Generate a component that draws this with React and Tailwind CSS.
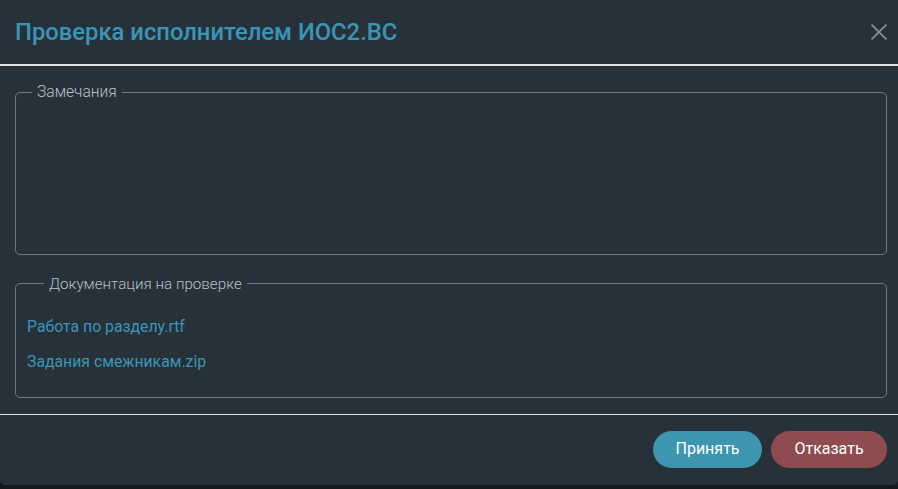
export default function App() {
  return (
    <div className="h-[489px] w-[898px] overflow-hidden bg-[#14191d] font-['Roboto',sans-serif]">
      <div className="flex h-[485px] flex-col rounded-b-[5px] bg-[#27313a]">
        <header className="flex h-[64px] items-center justify-between pl-[15px] pr-[11px]">
          <h1 className="pt-[2px] text-[23.8px] font-medium text-[#3b95b5]">Проверка исполнителем ИОС2.ВС</h1>
          <button type="button" aria-label="Закрыть" className="text-[#8b939a]">
            <svg width="16" height="16" viewBox="0 0 16 16" fill="none" stroke="currentColor" strokeWidth="1.6">
              <path d="M0.5 0.5 15.5 15.5M15.5 0.5 0.5 15.5" />
            </svg>
          </button>
        </header>
        <div className="h-[1.5px] bg-[#dfe3e6]" />

        <div className="flex flex-1 flex-col gap-[18px] pl-[15px] pr-[11px] pt-[15px]">
          <fieldset className="h-[174px] rounded-[5px] border border-[#687a87] pl-[16px]">
            <legend className="px-[5px] text-[15.6px] font-light text-[#b9c1c7]">Замечания</legend>
          </fieldset>

          <fieldset className="h-[125px] rounded-[5px] border border-[#687a87] pl-[11px]">
            <legend className="ml-[17px] px-[5px] text-[15.2px] font-light text-[#b9c1c7]">Документация на проверке</legend>
            <div className="mt-[22px] flex flex-col gap-[16px] text-[15.8px] leading-[19px]">
              <a href="#" className="text-[#3b95b5]">Работа по разделу.rtf</a>
              <a href="#" className="text-[#3b95b5]">Задания смежникам.zip</a>
            </div>
          </fieldset>
        </div>

        <div className="h-[1.5px] bg-[#dfe3e6]" />
        <footer className="flex h-[70px] items-center justify-end gap-[9px] pr-[11px] pb-[2px]">
          <button type="button" className="h-[37px] w-[109px] rounded-full bg-[#3d95b0] text-[16px] text-white">Принять</button>
          <button type="button" className="h-[37px] w-[116px] rounded-full bg-[#8f4c50] text-[16px] text-white">Отказать</button>
        </footer>
      </div>
    </div>
  );
}
